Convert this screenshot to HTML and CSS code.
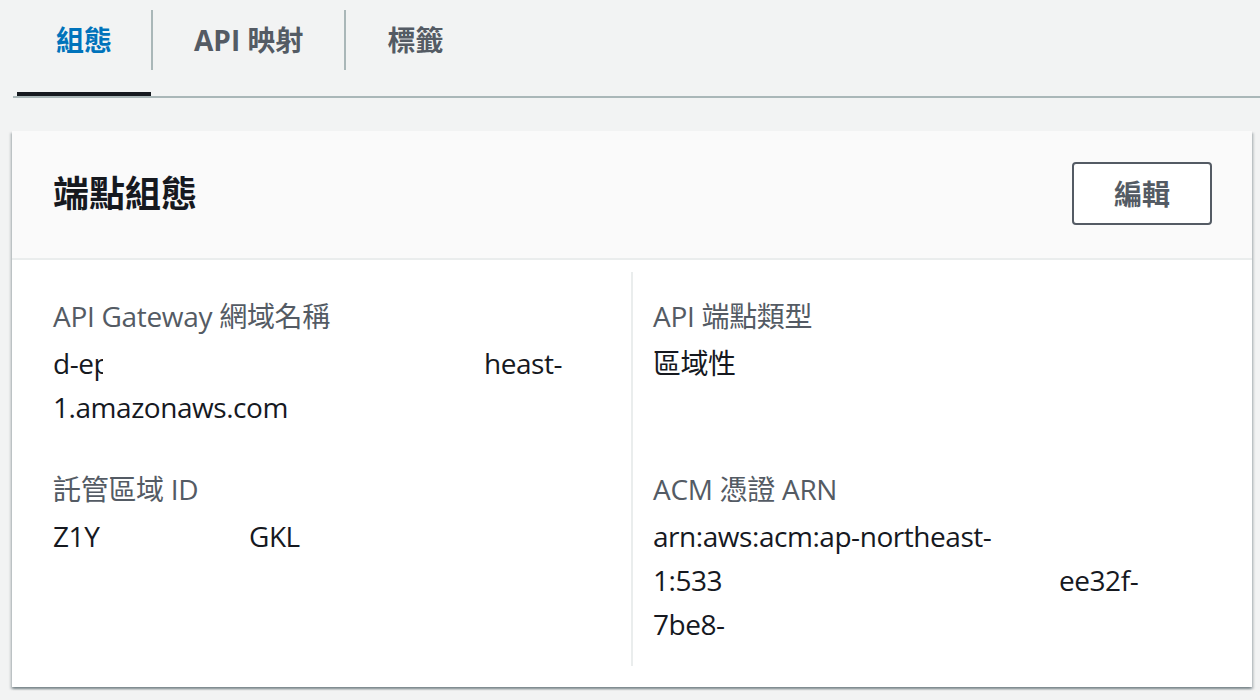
FILE: index.html
```html
<!DOCTYPE html>
<html lang="zh-Hant">
<head>
<meta charset="utf-8">
<title>端點組態</title>
<link rel="stylesheet" href="styles.css">
</head>
<body>
<div class="page">
  <nav class="tabs">
    <div class="tab tab-active"><span class="tab-label">組態</span></div>
    <div class="tab"><span class="tab-label tab-sep">API 映射</span></div>
    <div class="tab"><span class="tab-label tab-sep">標籤</span></div>
  </nav>

  <section class="card">
    <header class="card-header">
      <h2 class="card-title">端點組態</h2>
      <button class="btn" type="button">編輯</button>
    </header>
    <div class="card-body">
      <div class="kv-grid">
        <div class="cell cell-top cell-left">
          <div class="kv-label">API Gateway 網域名稱</div>
          <div class="kv-value">
            <div class="line"><span class="seg seg-dep">d-e<span class="clip clip-p">p</span></span>heast-</div>
            <div class="line">1.amazonaws.com</div>
          </div>
        </div>
        <div class="cell cell-top cell-right">
          <div class="kv-label">API 端點類型</div>
          <div class="kv-value">
            <div class="line">區域性</div>
          </div>
        </div>
        <div class="cell cell-bottom cell-left">
          <div class="kv-label">託管區域 ID</div>
          <div class="kv-value">
            <div class="line"><span class="seg seg-z1y">Z1Y</span>GKL</div>
          </div>
        </div>
        <div class="cell cell-bottom cell-right">
          <div class="kv-label">ACM 憑證 ARN</div>
          <div class="kv-value">
            <div class="line">arn:aws:acm:ap-northeast-</div>
            <div class="line"><span class="seg seg-533">1:533</span>ee32f-</div>
            <div class="line">7be8-</div>
          </div>
        </div>
      </div>
    </div>
  </section>
</div>
</body>
</html>
```

FILE: styles.css
```css
html, body {
  margin: 0;
  padding: 0;
}

body {
  background: #f2f3f3;
  font-family: "Open Sans", "Noto Sans CJK TC", sans-serif;
  color: #16191f;
  font-size: 28px;
  line-height: 44px;
}

.page {
  width: 1260px;
  height: 700px;
  overflow: hidden;
}

/* Tabs */
.tabs {
  display: flex;
  margin-left: 13px;
  padding-left: 4px;
  padding-top: 10px;
  border-bottom: 2px solid #aab7b8;
}

.tab {
  padding-bottom: 22px;
  border-bottom: 4px solid transparent;
}

.tab-active {
  border-bottom-color: #16191f;
}

.tab-label {
  display: block;
  height: 60px;
  line-height: 60px;
  padding: 0 39px;
  font-size: 28px;
  font-weight: 700;
  color: #545b64;
  white-space: nowrap;
}

.tab-active .tab-label {
  color: #0073bb;
}

.tab-sep {
  border-left: 2px solid #aab7b8;
  padding: 0 41px;
}

/* Card */
.card {
  margin: 33px 8px 0 12px;
  background: #ffffff;
  box-shadow: 0 2px 2px 0 rgba(0, 28, 36, 0.3),
              2px 2px 2px 0 rgba(0, 28, 36, 0.15),
              -2px 2px 2px 0 rgba(0, 28, 36, 0.15);
}

.card-header {
  display: flex;
  align-items: center;
  justify-content: space-between;
  padding: 31px 40px 33px 41px;
  background: #fafafa;
  border-bottom: 2px solid #eaeded;
}

.card-title {
  margin: 0;
  font-size: 36px;
  font-weight: 700;
  line-height: 44px;
  color: #16191f;
}

.btn {
  height: 63px;
  padding: 0 40px;
  background: #ffffff;
  border: 2px solid #545b64;
  border-radius: 4px;
  font-family: "Open Sans", "Noto Sans CJK TC", sans-serif;
  font-size: 28px;
  font-weight: 700;
  line-height: 44px;
  color: #545b64;
}

.card-body {
  padding: 12px 0 21px;
}

.kv-grid {
  display: grid;
  grid-template-columns: 619px 1fr;
}

.cell-left {
  padding-left: 41px;
  padding-right: 40px;
}

.cell-right {
  border-left: 2px solid #eaeded;
  padding-left: 20px;
  padding-right: 40px;
}

.cell-top {
  padding-top: 22px;
}

.cell-bottom {
  padding-top: 38px;
  padding-bottom: 20px;
}

.kv-label {
  color: #545b64;
  margin-bottom: 3px;
  white-space: nowrap;
  letter-spacing: -0.3px;
}

.kv-value {
  color: #16191f;
  letter-spacing: -0.45px;
}

.line {
  white-space: nowrap;
}

.seg {
  display: inline-block;
  vertical-align: top;
}

.seg-dep {
  width: 431px;
}

.seg-z1y {
  width: 196px;
}

.seg-533 {
  width: 406px;
}

.clip {
  display: inline-block;
  vertical-align: top;
  overflow: hidden;
  height: 44px;
}

.clip-p {
  width: 9px;
}
```
